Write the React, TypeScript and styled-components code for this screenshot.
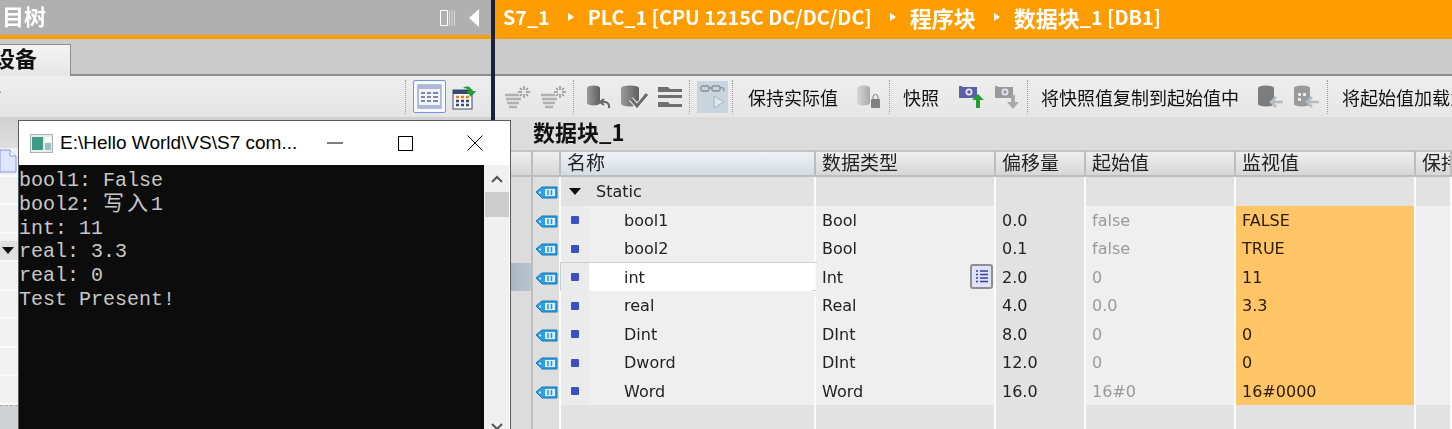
import React from "react";
import styled, { createGlobalStyle } from "styled-components";

const Global = createGlobalStyle`
  html, body { margin: 0; padding: 0; width: 1452px; height: 429px; overflow: hidden; background: #f0f0f0; }
  * { box-sizing: border-box; }
`;
const CJK = `"Noto Sans CJK SC", sans-serif`;
const UI = `"DejaVu Sans", "Noto Sans CJK SC", sans-serif`;

const Page = styled.div`position: relative; width: 1452px; height: 429px; display: flex; overflow: hidden; font-family: ${UI};`;
const LeftPane = styled.div`width: 491px; height: 429px; flex: none; display: flex; flex-direction: column; overflow: hidden; filter: blur(0.3px); & > * { flex: none; }`;
const Divider = styled.div`width: 4px; flex: none; background: #1c2238;`;
const RightPane = styled.div`flex: 1; min-width: 0; height: 429px; display: flex; flex-direction: column; overflow: hidden; filter: blur(0.35px); & > * { flex: none; }`;

const TreeTitle = styled.div`height: 35px; background: #b0b0b0; display: flex; align-items: center; justify-content: space-between; padding: 0 12px 6px 2px; color: #fff; font: bold 22px ${CJK};`;
const TitleIcons = styled.div`display: flex; align-items: center; gap: 13px; padding-top: 6px;`;
const OrangeLine = styled.div`height: 4px; background: #ff9c00;`;
const TabStrip = styled.div`height: 37px; background: #cbcbcb; border-bottom: 2px solid #8f8f8f; display: flex; align-items: flex-end;`;
const Tab = styled.div`width: 71px; height: 32px; margin-bottom: -2px; background: linear-gradient(#f4f4f4, #e6e6e6); border: 1px solid #8f8f8f; border-left: 0; border-bottom: 0; font: bold 22px/25px ${CJK}; color: #111; overflow: hidden; text-indent: -7px; white-space: nowrap;`;
const LeftTools = styled.div`height: 41px; background: linear-gradient(#eeeeee, #e4e4e4); display: flex; align-items: center; padding-right: 13px; gap: 6px; overflow: hidden;`;
const ClippedTool = styled.span`margin-left: -17px; margin-right: auto; font: 19px ${CJK}; color: #8a8a8a;`;
const DottedRule = styled.div`width: 1px; height: 34px; border-left: 1px dotted #9a9a9a; margin: 0 1px;`;
const ActiveTool = styled.div`width: 33px; height: 33px; border: 1px solid #6f96e6; border-radius: 2px; background: #f6f8fd; display: flex; align-items: center; justify-content: center;`;
const TreeHead = styled.div`height: 31px; background: linear-gradient(#d0d0d0, #dedede);`;
const TreeRow = styled.div<{ $sel?: boolean }>`height: 28.5px; border-bottom: 2px solid #fafafa; background: ${(p) => (p.$sel ? "linear-gradient(#f1f1f1 28%, #e0e0e0 28%)" : "#f1f1f1")}; display: flex; align-items: center; overflow: hidden;`;
const TreeCaretBox = styled.div`padding: 8px 0 0 2px; display: flex;`;
const TreeFoot = styled.div`height: 40px; border-top: 1px dashed #a8a8a8; background: #cfd2d5;`;

const Crumbs = styled.div`height: 39px; background: #ff9c00; color: #fff; display: flex; align-items: center; padding: 0 0 6px 8px; font: bold 19.7px ${CJK}; white-space: nowrap;`;
const CrumbCjk = styled.span`font-size: 22px;`;
const CrumbArrow = styled.span`width: 0; height: 0; margin: 0 14px 0 18px; border-left: 6px solid #fff; border-top: 4px solid transparent; border-bottom: 4px solid transparent;`;
const GreyStrip = styled.div`height: 37px; background: #cbcbcb; border-bottom: 2px solid #8f8f8f;`;
const Tools = styled.div`height: 41px; background: linear-gradient(#eeeeee, #e6e6e6); display: flex; align-items: center; padding-left: 5px; white-space: nowrap; overflow: hidden;`;
const ToolIcon = styled.div<{ $w?: number; $on?: boolean }>`width: ${(p) => p.$w ?? 36}px; height: 32px; flex: none; display: flex; align-items: center; justify-content: center; background: ${(p) => (p.$on ? "#c8d4de" : "transparent")};`;
const ToolSep = styled.div<{ $l: number; $r: number }>`width: 1px; height: 34px; flex: none; border-left: 1px dotted #9a9a9a; margin: 0 ${(p) => p.$r}px 0 ${(p) => p.$l}px;`;
const ToolText = styled.span<{ $w: number }>`width: ${(p) => p.$w}px; flex: none; font: 18px ${CJK}; color: #111;`;
const BlockTitle = styled.div`height: 33px; background: #dcdcdc; font: bold 22px/28px ${CJK}; color: #111; padding-left: 38px;`;

const Grid = styled.div`height: 279px; display: flex; flex-direction: column; background: #e0e0e0; overflow: hidden;`;
const Row = styled.div`display: grid; grid-template-columns: 38px 28px 255px 180px 90px 150px 180px 1fr; height: 28.5px; flex: none;`;
const Head = styled(Row)`height: 27px; background: linear-gradient(#f1f1f1, #d4d4d4);`;
const HeadCell = styled.div<{ $sel?: boolean }>`font: 19px/20px ${CJK}; color: #222; padding-left: 6px; border-right: 2px solid #bdbdbd; border-bottom: 2px solid #bdbdbd; border-top: 2px solid #c4c4c4; white-space: nowrap; overflow: hidden; background: ${(p) => (p.$sel ? "linear-gradient(#eef2f6, #d4dce4)" : "transparent")};`;
const Cell = styled.div<{ $bg?: string; $col?: string }>`
  position: relative; font-size: 16px; line-height: 29px; color: ${(p) => p.$col ?? "#222"};
  background: ${(p) => p.$bg ?? "#efefef"};
  border-bottom: 2px solid #fbfbfb; border-right: 2px solid #fbfbfb; padding-left: 6px; white-space: nowrap;
`;
const Gutter = styled(Cell)<{ $hl?: boolean }>`background: ${(p) => (p.$hl ? "linear-gradient(90deg, #9fa9b3, #b9c6d2)" : "linear-gradient(90deg, #a8a8a8, #dcdcdc 40%)")}; border-right: 2px solid #bdbdbd; border-bottom-color: #f0f0f0;`;
const IconCell = styled(Cell)`padding: 1px 0 0; display: flex; align-items: center; justify-content: center; background: #dedede;`;
const NameCell = styled(Cell)<{ $sel?: boolean; $group?: boolean }>`padding: 0; display: grid; grid-template-columns: 28px 1fr; background: ${(p) => (p.$sel ? "#ffffff" : p.$group ? "#e2e2e2" : "#efefef")}; ${(p) => (p.$sel ? "box-shadow: 0 0 0 1px #c8d0d8;" : "")}`;
const NameMark = styled.div<{ $group?: boolean }>`background: ${(p) => (p.$group ? "#e2e2e2" : "#ebebeb")}; display: flex; align-items: center; justify-content: center;`;
const NameText = styled.div<{ $group?: boolean }>`padding-left: ${(p) => (p.$group ? "7px" : "35px")}; color: #222;`;
const StaticCell = styled(Cell)`background: #e2e2e2;`;
const Dot = styled.span`width: 8px; height: 8px; background: #3a50c4; border-radius: 1px;`;
const Caret = styled.span`width: 0; height: 0; border-top: 7px solid #111; border-left: 6px solid transparent; border-right: 6px solid transparent; margin-bottom: 1px;`;
const ListBtn = styled.div`position: absolute; right: 1px; top: 1px; width: 23px; height: 25px; border: 2px solid #8f8f8f; border-radius: 3px; background: #dfe3fa; display: flex; align-items: center; justify-content: center;`;
const Handle = styled.span`position: absolute; right: -4px; bottom: -4px; width: 6px; height: 6px; background: #c4ccd4;`;

const Console = styled.div`position: absolute; left: 18px; top: 120px; width: 493px; height: 320px; background: #fff; border: 1px solid #5b5b5b; border-bottom: 0;`;
const ConsoleBar = styled.div`height: 44px; display: flex; align-items: center; padding-left: 11px; font: 19px "Liberation Sans", sans-serif; color: #000;`;
const ConsoleTitle = styled.span`margin-left: 7px; width: 240px; white-space: nowrap; overflow: hidden;`;
const WinBtn = styled.div`width: 70px; height: 44px; flex: none; display: flex; align-items: center; justify-content: center;`;
const ConsoleMain = styled.div`display: flex; height: 275px;`;
const Screen = styled.div`flex: 1; background: #0c0c0c; color: #c8c8c8; font: 20px "Liberation Mono", "Noto Sans CJK SC", monospace; padding: 4px 0 0 0;`;
const ConsoleLine = styled.div`height: 23.8px; line-height: 23.8px; white-space: pre;`;
const CjkRun = styled.span`font: 21px/1px ${CJK}; letter-spacing: 3px;`;
const Scroll = styled.div`width: 26px; flex: none; background: #f0f0f0; border-right: 1px solid #fff; position: relative; display: flex; flex-direction: column; align-items: center;`;
const ScrollBtn = styled.div`height: 27px; display: flex; align-items: center; justify-content: center; flex: none;`;
const Thumb = styled.div`width: 24px; height: 25px; background: #cdcdcd; flex: none;`;
const Spacer = styled.div`flex: 1;`;

const Tag = () => (
  <svg width="23" height="16" viewBox="0 0 23 16">
    <path d="M1 8 L7 3 H22 V14 H7 Z" fill="#2f9fe0" stroke="#1677b8" />
    <rect x="10" y="5" width="10" height="7" fill="#d8f0ff" />
    <path d="M13 6v5M16.5 6v5" stroke="#2f8fd0" strokeWidth="1.5" />
    <circle cx="5" cy="8.500" r="1" fill="#fff" />
  </svg>
);
const Gear = () => (
  <svg width="28" height="26" viewBox="0 0 28 26">
    <path d="M1 11h14M2 15h15M3 19h12M5 23h8" stroke="#b0b0b0" strokeWidth="2.500" />
    <path d="M20 2v4M20 10v4M14 8h4M22 8h4M16 4l2 2M24 4l-2 2M16 12l2-2M24 12l-2-2" stroke="#949494" strokeWidth="1.500" />
  </svg>
);
const Db = ({ mark }: { mark: "undo" | "check" | "lock" }) => {
  const id = `dbg-${mark}`;
  const wide = mark === "check";
  return (
    <svg width="30" height="26" viewBox="0 0 30 26">
      <defs>
        <linearGradient id={id} x1="0" x2="1" y1="0" y2="0">
          <stop offset="0" stopColor={mark === "lock" ? "#d8d8d8" : "#9a9a9a"} />
          <stop offset="1" stopColor={mark === "lock" ? "#a8a8a8" : "#5f5f5f"} />
        </linearGradient>
      </defs>
      {wide
        ? <path d="M2 4 a9 2.500 0 0 1 18 0 V20 a9 2.500 0 0 1 -18 0 Z" fill={`url(#${id})`} />
        : <path d="M4 4 a6.500 2.500 0 0 1 13 0 V19 a6.500 2.500 0 0 1 -13 0 Z" fill={`url(#${id})`} />}
      {mark === "undo" && <path d="M26 24c1-5-3-7-8-6M21 15l-4 3 4 3" fill="none" stroke="#666" strokeWidth="2" />}
      {mark === "check" && (
        <g fill="none">
          <path d="M12 15l6 7 10-12" stroke="#f0f0f0" strokeWidth="5" />
          <path d="M12 15l6 7 10-12" stroke="#6a6a6a" strokeWidth="3" />
        </g>
      )}
      {mark === "lock" && <g><rect x="18" y="15" width="9" height="9" rx="1" fill="#808080" /><path d="M20 15v-2a2.500 2.500 0 0 1 5 0v2" fill="none" stroke="#808080" /></g>}
    </svg>
  );
};
const ListIcon = () => (
  <svg width="26" height="24" viewBox="0 0 26 24">
    <path d="M1 2h10l2 2h12v3H1zM1 10h24v3H1zM1 17h10l2 2h12v3H1z" fill="#6f6f6f" />
  </svg>
);
const Glasses = () => (
  <svg width="28" height="28" viewBox="0 0 28 28">
    <rect x="2" y="3" width="8" height="5" rx="1.500" fill="none" stroke="#8a8f96" strokeWidth="1.300" />
    <rect x="13" y="3" width="8" height="5" rx="1.500" fill="none" stroke="#8a8f96" strokeWidth="1.300" />
    <path d="M10 5h3M21 5c3-1 4 0 4 3" fill="none" stroke="#8a8f96" strokeWidth="1.300" />
    <path d="M15 13 L25 19 L15 25 Z" fill="#dde4ea" stroke="#aab4bc" />
  </svg>
);
const Camera = ({ up, body }: { up?: boolean; body: string }) => (
  <svg width="28" height="28" viewBox="0 0 28 28">
    <path d="M1 3h3v1h15v11H1z" fill={body} />
    <circle cx="11" cy="9" r="3.500" fill="#e8e8f4" />
    <circle cx="11" cy="9" r="1.800" fill={body} />
    {up ? <path d="M20 11l6 6h-4v8h-4v-8h-4z" fill="#20a030" /> : <path d="M21 12v7h4l-6 7-6-7h4v-7z" fill="#a8a8a8" />}
  </svg>
);
const DbArrow = ({ spots }: { spots?: boolean }) => (
  <svg width="28" height="26" viewBox="0 0 28 26">
    <path d="M2 4 a8 2.500 0 0 1 16 0 V20 a8 2.500 0 0 1 -16 0 Z" fill={spots ? "#9a9a9a" : "#7c7c7c"} />
    {spots && <path d="M6 9h3v3H6zM11 9h3v3h-3zM6 14h3v3H6z" fill="#e8e8e8" />}
    <path d="M27 18H16M20 13l-5 5 5 5" fill="none" stroke="#b4bcc4" strokeWidth="2.500" />
  </svg>
);
const TableTool = () => (
  <svg width="25" height="25" viewBox="0 0 25 25">
    <rect x="1" y="1" width="23" height="23" fill="#f2f4fb" stroke="#7585b0" />
    <rect x="1" y="1" width="23" height="4" fill="#aeb9da" />
    <path d="M4 9h4M10 9h4M16 9h5M4 13h4M10 13h4M16 13h5M4 17h4M10 17h4M16 17h5" stroke="#8088a8" strokeWidth="2" />
    <rect x="1" y="21" width="23" height="3" fill="#aeb9da" />
  </svg>
);
const TableGo = () => (
  <svg width="26" height="26" viewBox="0 0 26 26">
    <rect x="1" y="6" width="19" height="19" fill="#f7f7f7" stroke="#3a4a70" />
    <rect x="1" y="6" width="19" height="4" fill="#34496e" />
    <path d="M4 13h3M9 13h3M14 13h3" stroke="#e88020" strokeWidth="2.500" />
    <path d="M4 17h3M9 17h3M14 17h3M4 21h3M9 21h3M14 21h3" stroke="#3a4a70" strokeWidth="2.500" />
    <path d="M11 4c5-3 8-1 9 3h4l-5 6-5-6h3c-1-2-3-3-6-3z" fill="#20a030" />
  </svg>
);
const PaneIcon = () => (
  <svg width="16" height="16" viewBox="0 0 16 16">
    <rect x="0.500" y="0.500" width="7" height="15" fill="none" stroke="#fff" />
    <path d="M9.500 0.500v15M12 0.500v15M14.500 0.500v15" stroke="#d8d8d8" />
  </svg>
);
const Collapse = () => (
  <svg width="10" height="18" viewBox="0 0 10 18"><path d="M10 0v18L0 9z" fill="#fff" /></svg>
);
const FileIcon = () => (
  <svg width="18" height="24" viewBox="0 0 18 24">
    <path d="M0 1h10l6 6v16H0z" fill="#dfe5fa" stroke="#8a9ce0" />
    <path d="M10 1v6h6" fill="#fff" stroke="#8a9ce0" />
  </svg>
);
const ConsoleIcon = () => (
  <svg width="23" height="19" viewBox="0 0 23 19">
    <rect x="0.500" y="0.500" width="22" height="18" fill="#e8eeee" stroke="#a8b0b0" />
    <rect x="2" y="3" width="11" height="13" fill="#3f9a88" />
    <rect x="15" y="3" width="6" height="5" fill="#fff" />
    <rect x="15" y="9" width="6" height="7" fill="#a0c0c0" />
  </svg>
);
const Chevron = ({ up }: { up?: boolean }) => (
  <svg width="12" height="8" viewBox="0 0 12 8"><path d={up ? "M1 7l5-5 5 5" : "M1 1l5 5 5-5"} fill="none" stroke="#555" strokeWidth="2" /></svg>
);
const Lines = () => (
  <svg width="14" height="14" viewBox="0 0 14 14">
    <path d="M1 2h2M5 2h8M1 5.500h2M5 5.500h8M1 9h2M5 9h8M1 12.500h2M5 12.500h8" stroke="#34409a" strokeWidth="1.500" />
  </svg>
);

const rows = [
  { n: "bool1", t: "Bool", o: "0.0", s: "false", m: "FALSE" },
  { n: "bool2", t: "Bool", o: "0.1", s: "false", m: "TRUE" },
  { n: "int", t: "Int", o: "2.0", s: "0", m: "11", sel: true },
  { n: "real", t: "Real", o: "4.0", s: "0.0", m: "3.3" },
  { n: "Dint", t: "DInt", o: "8.0", s: "0", m: "0" },
  { n: "Dword", t: "DInt", o: "12.0", s: "0", m: "0" },
  { n: "Word", t: "Word", o: "16.0", s: "16#0", m: "16#0000" },
];

export default function App() {
  return (
    <Page>
      <Global />
      <LeftPane>
        <TreeTitle>
          <span>目树</span>
          <TitleIcons><PaneIcon /><Collapse /></TitleIcons>
        </TreeTitle>
        <OrangeLine />
        <TabStrip><Tab>设备</Tab></TabStrip>
        <LeftTools>
          <ClippedTool>前</ClippedTool>
          <DottedRule />
          <ActiveTool><TableTool /></ActiveTool>
          <TableGo />
        </LeftTools>
        <TreeHead />
        <TreeRow><FileIcon /></TreeRow>
        <TreeRow />
        <TreeRow />
        <TreeRow $sel><TreeCaretBox><Caret /></TreeCaretBox></TreeRow>
        {[0, 1, 2, 3, 4].map((i) => <TreeRow key={i} />)}
        <TreeFoot />
      </LeftPane>
      <Divider />
      <RightPane>
        <Crumbs>
          S7_1<CrumbArrow />PLC_1 [CPU 1215C DC/DC/DC]<CrumbArrow /><CrumbCjk>程序块</CrumbCjk><CrumbArrow /><CrumbCjk>数据块</CrumbCjk>_1 [DB1]
        </Crumbs>
        <GreyStrip />
        <Tools>
          <ToolIcon><Gear /></ToolIcon>
          <ToolIcon><Gear /></ToolIcon>
          <ToolSep $l={1} $r={6} />
          <ToolIcon><Db mark="undo" /></ToolIcon>
          <ToolIcon><Db mark="check" /></ToolIcon>
          <ToolIcon><ListIcon /></ToolIcon>
          <ToolSep $l={1} $r={7} />
          <ToolIcon $w={31} $on><Glasses /></ToolIcon>
          <ToolSep $l={4} $r={15} />
          <ToolText $w={102}>保持实际值</ToolText>
          <ToolIcon><Db mark="lock" /></ToolIcon>
          <ToolSep $l={3} $r={13} />
          <ToolText $w={51}>快照</ToolText>
          <ToolIcon><Camera up body="#5a60a8" /></ToolIcon>
          <ToolIcon><Camera body="#9a9a9a" /></ToolIcon>
          <ToolSep $l={1} $r={13} />
          <ToolText $w={211}>将快照值复制到起始值中</ToolText>
          <ToolIcon><DbArrow /></ToolIcon>
          <ToolIcon><DbArrow spots /></ToolIcon>
          <ToolSep $l={3} $r={14} />
          <ToolText $w={180}>将起始值加载为实际值</ToolText>
        </Tools>
        <BlockTitle>数据块_1</BlockTitle>
        <Grid>
          <Head>
            <HeadCell /><HeadCell />
            <HeadCell $sel>名称</HeadCell>
            <HeadCell>数据类型</HeadCell>
            <HeadCell>偏移量</HeadCell>
            <HeadCell>起始值</HeadCell>
            <HeadCell>监视值</HeadCell>
            <HeadCell>保持</HeadCell>
          </Head>
          <Row>
            <Gutter />
            <IconCell><Tag /></IconCell>
            <NameCell $group>
              <NameMark $group><Caret /></NameMark>
              <NameText $group>Static</NameText>
            </NameCell>
            <StaticCell /><StaticCell /><StaticCell /><StaticCell /><StaticCell />
          </Row>
          {rows.map((r) => (
            <Row key={r.n}>
              <Gutter $hl={r.sel} />
              <IconCell><Tag /></IconCell>
              <NameCell $sel={r.sel}>
                <NameMark><Dot /></NameMark>
                <NameText>{r.n}</NameText>
                {r.sel && <Handle />}
              </NameCell>
              <Cell>{r.t}{r.sel && <ListBtn><Lines /></ListBtn>}</Cell>
              <Cell $bg="#e2e2e2">{r.o}</Cell>
              <Cell $col="#9a9a9a">{r.s}</Cell>
              <Cell $bg="#ffc566" $col="#2a1a00">{r.m}</Cell>
              <Cell />
            </Row>
          ))}
          <Row>
            <Gutter /><IconCell /><StaticCell /><StaticCell /><StaticCell /><StaticCell /><StaticCell /><StaticCell />
          </Row>
        </Grid>
      </RightPane>
      <Console>
        <ConsoleBar>
          <ConsoleIcon />
          <ConsoleTitle>E:\Hello World\VS\S7 com...</ConsoleTitle>
          <WinBtn><svg width="16" height="2" viewBox="0 0 16 2"><path d="M0 1h16" stroke="#000" /></svg></WinBtn>
          <WinBtn><svg width="15" height="15" viewBox="0 0 15 15"><rect x="0.500" y="0.500" width="14" height="14" fill="none" stroke="#000" /></svg></WinBtn>
          <WinBtn><svg width="16" height="16" viewBox="0 0 16 16"><path d="M0.500 0.500l15 15M15.500 0.500l-15 15" stroke="#000" /></svg></WinBtn>
        </ConsoleBar>
        <ConsoleMain>
          <Screen>
            <ConsoleLine>bool1: False</ConsoleLine>
            <ConsoleLine>{"bool2: "}<CjkRun>写入</CjkRun>1</ConsoleLine>
            <ConsoleLine>int: 11</ConsoleLine>
            <ConsoleLine>real: 3.3</ConsoleLine>
            <ConsoleLine>real: 0</ConsoleLine>
            <ConsoleLine>Test Present!</ConsoleLine>
          </Screen>
          <Scroll>
            <ScrollBtn><Chevron up /></ScrollBtn>
            <Thumb />
            <Spacer />
            <ScrollBtn><Chevron /></ScrollBtn>
          </Scroll>
        </ConsoleMain>
      </Console>
    </Page>
  );
}
